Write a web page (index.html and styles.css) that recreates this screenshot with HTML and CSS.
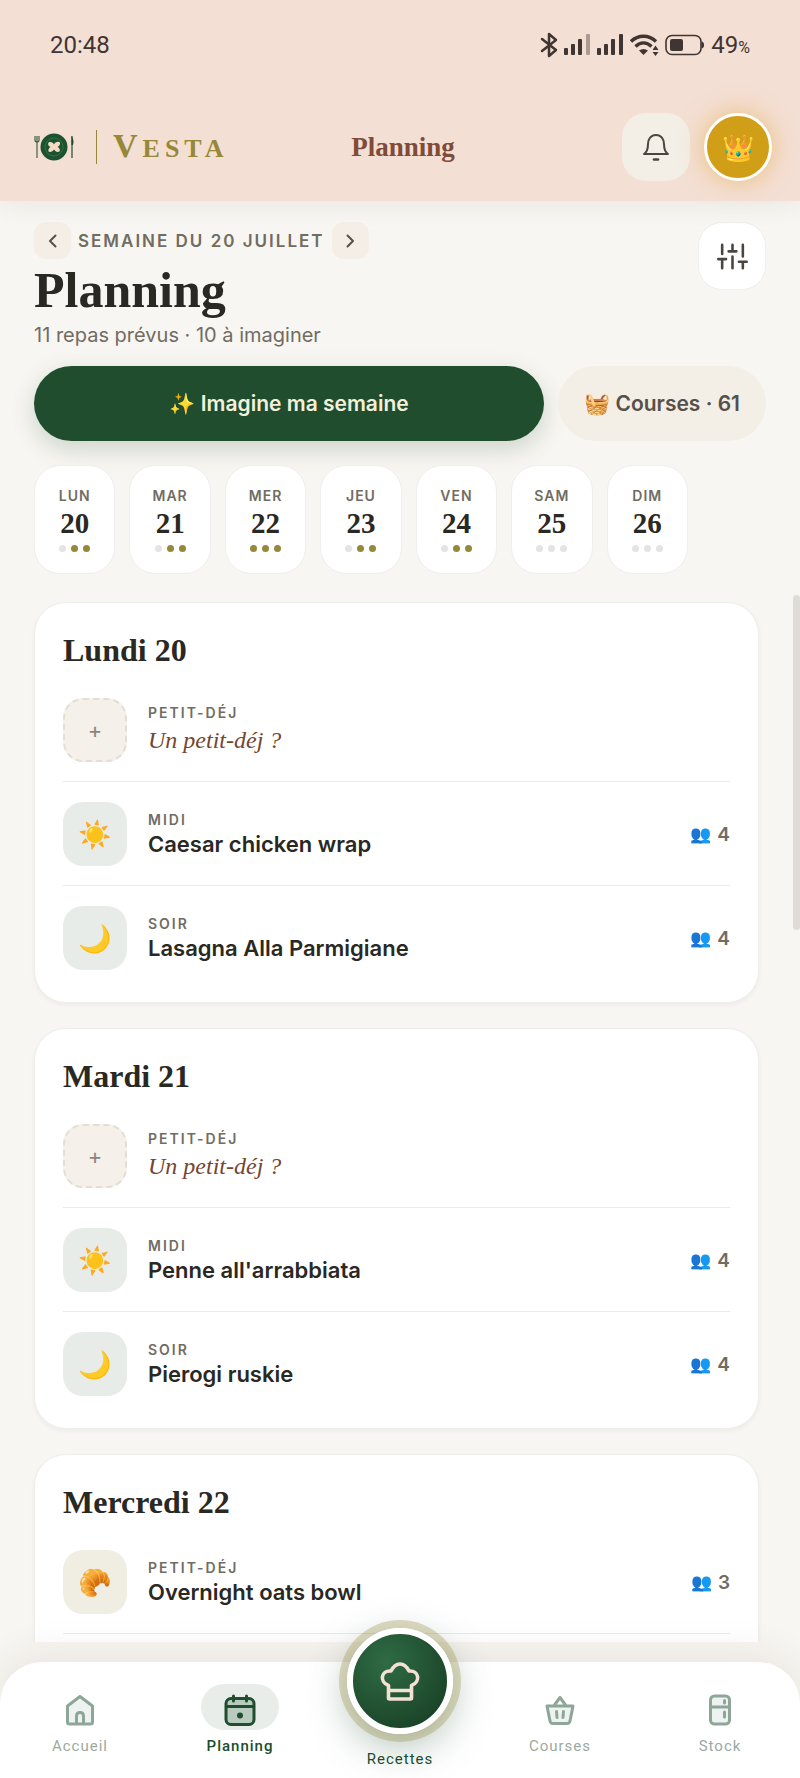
FILE: index.html
```html
<!DOCTYPE html>
<html lang="fr">
<head>
    <meta charset="UTF-8">
    <meta name="viewport" content="width=device-width, initial-scale=1.0">
    <title>Vesta - Planning</title>
    <link rel="stylesheet" href="styles.css">
</head>
<body>
    <!-- Barre d'état + en-tête -->
    <header class="header">
        <div class="status-bar">
            <span class="clock">20:48</span>
            <div class="status-icons">
                <svg width="18" height="26" viewBox="0 0 18 26" fill="none" stroke="#3f3532" stroke-width="2.500" stroke-linejoin="round" stroke-linecap="round"><path d="M2 7l14 11-7 6V2l7 6L2 19"/></svg>
                <svg width="27" height="22" viewBox="0 0 27 22" fill="#3f3532"><rect y="14" width="4" height="7" rx="1"/><rect x="7" y="10" width="4" height="11" rx="1"/><rect x="14" y="5" width="4" height="16" rx="1"/><rect x="22" width="4" height="21" rx="1" opacity=".4"/></svg>
                <svg width="27" height="22" viewBox="0 0 27 22" fill="#3f3532"><rect y="14" width="4" height="7" rx="1"/><rect x="7" y="10" width="4" height="11" rx="1"/><rect x="14" y="5" width="4" height="16" rx="1"/><rect x="22" width="4" height="21" rx="1"/></svg>
                <svg width="29" height="22" viewBox="0 0 29 22" fill="none" stroke="#3f3532" stroke-width="3.400"><path d="M1 7.500C8 .5 19 .5 26 7.500M5.500 12.500c5-4.600 11-4.600 16 0"/><path d="M9 16.500c3-2 6-2 9 0L13.500 21z" fill="#3f3532" stroke="none"/><path d="M22.500 16l3-4.500 3 4.500zM22.500 18h6l-3 4z" fill="#3f3532" stroke="none"/></svg>
                <svg width="40" height="22" viewBox="0 0 40 22"><rect x="1" y="1.500" width="35" height="19" rx="6" fill="none" stroke="#3f3532" stroke-width="1.600"/><rect x="5" y="5" width="13" height="12" rx="2" fill="#3f3532"/><path d="M37 8c2 0 2 6 0 6z" fill="#3f3532" stroke="#3f3532"/></svg>
                <span class="battery">49<small>%</small></span>
            </div>
        </div>
        <div class="top-bar">
            <a class="brand" href="#">
                <svg width="40" height="28" viewBox="0 0 40 28"><g fill="none" stroke="#3c6349"><path d="M1 3v4q0 2 2 2t2-2V3M3 3v22" stroke-width="1.200"/><path d="M38 3v22" stroke-width="1.400"/></g><path d="M37.500 3q3 4 1.500 9h-1.500z" fill="#1f4d2e"/><circle cx="20" cy="14" r="13.500" fill="#1b5230"/><circle cx="20" cy="14" r="9" fill="none" stroke="#3c7a4e" stroke-width=".8"/><path d="M20 11.500C21 9 24 8 26 9.500c.5 2-1 3.500-2.500 4.500 2 1 3 2.500 2 4.500-2.500 1-4 0-5.500-2-1.500 2-3.500 3-5.500 2-.5-2 .5-3.500 2-4.500-2-1-3-2.500-2-4.500 2-1 4-.5 5.500 2z" fill="#f3dcc3"/></svg>
                <span class="brand-line"></span>
                <span class="brand-name">V<small>ESTA</small></span>
            </a>
            <span class="page-name">Planning</span>
            <div class="top-actions">
                <button class="bell-button" aria-label="Notifications">
                    <svg width="28" height="28" viewBox="0 0 28 28" fill="none" stroke="#4a4540" stroke-width="2" stroke-linejoin="round"><path d="M2 21c3-2 4-5 4-10 0-5 3-9 8-9s8 4 8 9c0 5 1 8 4 10z"/><path d="M12 26.500h4" stroke-width="2.600" stroke-linecap="round"/></svg>
                </button>
                <button class="avatar-button" aria-label="Profil">👑</button>
            </div>
        </div>
    </header>

    <main class="content">
        <section class="intro">
            <div>
                <div class="week-nav">
                    <button class="week-button" aria-label="Semaine précédente"><svg width="14" height="14" viewBox="0 0 14 14" fill="none" stroke="#57504a" stroke-width="2" stroke-linecap="round" stroke-linejoin="round"><path d="M9.500 1.500L4 7l5.500 5.500"/></svg></button>
                    <span class="week-label">SEMAINE DU 20 JUILLET</span>
                    <button class="week-button" aria-label="Semaine suivante"><svg width="14" height="14" viewBox="0 0 14 14" fill="none" stroke="#57504a" stroke-width="2" stroke-linecap="round" stroke-linejoin="round"><path d="M4.500 1.500L10 7l-5.500 5.500"/></svg></button>
                </div>
                <h1>Planning</h1>
                <p class="summary">11 repas prévus · 10 à imaginer</p>
            </div>
            <button class="filter-button" aria-label="Réglages">
                <svg width="31" height="31" viewBox="0 0 24 24" fill="none" stroke="#4a4540" stroke-width="2" stroke-linecap="round"><path d="M4 21v-7M4 10V3M12 21v-9M12 8V3M20 21v-5M20 12V3M1 14h6M9 8h6M17 16h6"/></svg>
            </button>
        </section>

        <div class="actions">
            <button class="action-button imagine-button">✨ Imagine ma semaine</button>
            <button class="action-button shopping-button">🧺 Courses · 61</button>
        </div>

        <div class="days">
            <button class="day"><span class="day-name">LUN</span><span class="day-number">20</span><span class="dots"><i></i><i class="on"></i><i class="on"></i></span></button>
            <button class="day"><span class="day-name">MAR</span><span class="day-number">21</span><span class="dots"><i></i><i class="on"></i><i class="on"></i></span></button>
            <button class="day"><span class="day-name">MER</span><span class="day-number">22</span><span class="dots"><i class="on"></i><i class="on"></i><i class="on"></i></span></button>
            <button class="day"><span class="day-name">JEU</span><span class="day-number">23</span><span class="dots"><i></i><i class="on"></i><i class="on"></i></span></button>
            <button class="day"><span class="day-name">VEN</span><span class="day-number">24</span><span class="dots"><i></i><i class="on"></i><i class="on"></i></span></button>
            <button class="day"><span class="day-name">SAM</span><span class="day-number">25</span><span class="dots"><i></i><i></i><i></i></span></button>
            <button class="day"><span class="day-name">DIM</span><span class="day-number">26</span><span class="dots"><i></i><i></i><i></i></span></button>
        </div>

        <!-- Repas de la semaine -->
        <div class="cards">
            <section class="card">
                <h2>Lundi 20</h2>
                <div class="meal">
                    <button class="tile tile-empty" aria-label="Ajouter">+</button>
                    <div class="meal-text"><span class="slot">PETIT-DÉJ</span><span class="suggestion">Un petit-déj ?</span></div>
                </div>
                <div class="meal">
                    <span class="tile">☀️</span>
                    <div class="meal-text"><span class="slot">MIDI</span><span class="meal-name">Caesar chicken wrap</span></div>
                    <span class="guests"><span class="people">👥</span>4</span>
                </div>
                <div class="meal">
                    <span class="tile">🌙</span>
                    <div class="meal-text"><span class="slot">SOIR</span><span class="meal-name">Lasagna Alla Parmigiane</span></div>
                    <span class="guests"><span class="people">👥</span>4</span>
                </div>
            </section>

            <section class="card">
                <h2>Mardi 21</h2>
                <div class="meal">
                    <button class="tile tile-empty" aria-label="Ajouter">+</button>
                    <div class="meal-text"><span class="slot">PETIT-DÉJ</span><span class="suggestion">Un petit-déj ?</span></div>
                </div>
                <div class="meal">
                    <span class="tile">☀️</span>
                    <div class="meal-text"><span class="slot">MIDI</span><span class="meal-name">Penne all'arrabbiata</span></div>
                    <span class="guests"><span class="people">👥</span>4</span>
                </div>
                <div class="meal">
                    <span class="tile">🌙</span>
                    <div class="meal-text"><span class="slot">SOIR</span><span class="meal-name">Pierogi ruskie</span></div>
                    <span class="guests"><span class="people">👥</span>4</span>
                </div>
            </section>

            <section class="card">
                <h2>Mercredi 22</h2>
                <div class="meal">
                    <span class="tile tile-morning">🥐</span>
                    <div class="meal-text"><span class="slot">PETIT-DÉJ</span><span class="meal-name">Overnight oats bowl</span></div>
                    <span class="guests"><span class="people">👥</span>3</span>
                </div>
                <div class="meal"></div>
            </section>
        </div>
    </main>
    <div class="scroll-thumb"></div>

    <!-- Navigation -->
    <nav class="tab-bar">
        <a class="tab" href="#">
            <span class="tab-icon"><svg width="32" height="32" viewBox="0 0 32 32" fill="#edf3f0" stroke="#8ea698" stroke-width="3" stroke-linejoin="round"><path d="M3.500 12L16 2.500 28.500 12v16q0 2-2 2h-21q-2 0-2-2z"/><path d="M12.500 30V22q0-3.500 3.500-3.500t3.500 3.500v8" fill="none"/></svg></span>
            Accueil
        </a>
        <a class="tab active" href="#">
            <span class="tab-icon"><svg width="32" height="32" viewBox="0 0 32 32" fill="none" stroke="#204d2e" stroke-width="3" stroke-linecap="round"><rect x="2" y="4.500" width="28" height="26" rx="5" fill="#b9cabf"/><path d="M3 12.500h26M9.500 2v5M22.500 2v5"/><circle cx="16" cy="21.500" r="3" fill="#204d2e" stroke="none"/></svg></span>
            Planning
        </a>
        <a class="tab tab-main" href="#">
            <span class="chef-button"><svg width="40" height="40" viewBox="0 0 40 40" fill="none" stroke="#f4e0d4" stroke-width="3.600" stroke-linejoin="round"><path d="M8.500 37V24.500C-1 21 1 9 11 10c2-4 5-7 9-7s7 3 9 7c10-1 12 11 2.500 14.500V37q0 1-1 1h-21q-1 0-1-1zM8.500 29.500h23"/></svg></span>
            Recettes
        </a>
        <a class="tab" href="#">
            <span class="tab-icon"><svg width="32" height="32" viewBox="0 0 32 32" fill="#edf3f0" stroke="#8ea698" stroke-width="3" stroke-linejoin="round" stroke-linecap="round"><path d="M3 12h26l-3 15q-.5 2.500-3 2.500H9Q6.500 29.500 6 27z"/><path d="M10.500 11L16 3.500 21.500 11M12.500 17.500l.5 6M19.500 17.500l-.5 6" fill="none"/></svg></span>
            Courses
        </a>
        <a class="tab" href="#">
            <span class="tab-icon"><svg width="32" height="32" viewBox="0 0 32 32" fill="#edf3f0" stroke="#8ea698" stroke-width="3" stroke-linecap="round"><rect x="6.500" y="2" width="19" height="28" rx="4"/><path d="M7 13h18M20.500 6.500v2.500M20.500 18v5" fill="none"/></svg></span>
            Stock
        </a>
    </nav>
</body>
</html>
```
FILE: styles.css
```css
:root {
    --green: #204d2e;
    --gold: #968838;
    --text: #2a2822;
    --muted: #706c62;
    --background: #f8f6f2;
    --blush: #f4dfd4;
    --cream: #f3eee6;
    --line: #efeeec;
    --serif: "Liberation Serif", serif;
}

* {
    box-sizing: border-box;
    margin: 0;
    padding: 0;
}

body {
    height: 100vh;
    display: flex;
    flex-direction: column;
    overflow: hidden;
    position: relative;
    background: var(--background);
    color: var(--text);
    font-family: Inter, sans-serif;
}

button {
    border: none;
    font-family: inherit;
    color: inherit;
    cursor: pointer;
}

a {
    color: inherit;
    text-decoration: none;
}

/* En-tête */
.header {
    background: var(--blush);
    box-shadow: 0 4px 24px rgba(60, 40, 30, 0.07);
    position: relative;
    z-index: 2;
}

.status-bar {
    display: flex;
    justify-content: space-between;
    align-items: center;
    height: 90px;
    padding: 0 50px;
    color: #3f3532;
    font-family: Roboto, sans-serif;
    font-size: 24px;
}

.status-icons {
    display: flex;
    align-items: center;
    gap: 6px;
}

.battery small {
    font-size: 16px;
}

.top-bar {
    display: grid;
    grid-template-columns: 1fr auto 1fr;
    align-items: center;
    padding: 23px 28px 20px 34px;
}

.brand {
    display: flex;
    align-items: center;
    color: var(--gold);
}

.brand-line {
    width: 1px;
    height: 34px;
    margin: 0 16px 0 22px;
    background: var(--gold);
}

.brand-name {
    font-family: var(--serif);
    font-size: 34px;
    font-weight: 700;
    line-height: 34px;
    letter-spacing: 5px;
}

.brand-name small {
    font-size: 26px;
}

.page-name {
    color: #804c38;
    font-family: var(--serif);
    font-size: 27px;
    font-weight: 700;
}

.top-actions {
    display: flex;
    justify-content: flex-end;
    gap: 14px;
}

.bell-button,
.avatar-button,
.filter-button {
    display: flex;
    align-items: center;
    justify-content: center;
    width: 68px;
    height: 68px;
    border-radius: 24px;
}

.bell-button {
    background: var(--cream);
}

.avatar-button {
    border: 3px solid #fff;
    border-radius: 50%;
    background: #d19f17;
    box-shadow: 0 0 24px rgba(224, 160, 30, 0.5);
    font-size: 26px;
}

/* Contenu */
.content {
    flex: 1;
    min-height: 0;
    overflow: hidden;
    padding: 21px 34px 0;
}

.intro {
    display: flex;
    justify-content: space-between;
    align-items: flex-start;
}

.week-nav {
    display: flex;
    align-items: center;
    gap: 7px;
}

.week-button {
    display: flex;
    align-items: center;
    justify-content: center;
    width: 37px;
    height: 37px;
    border-radius: 12px;
    background: #f4eee7;
}

.week-label {
    color: var(--muted);
    font-size: 17px;
    font-weight: 600;
    letter-spacing: 2px;
}

h1 {
    font-family: var(--serif);
    font-size: 50px;
    line-height: 62px;
}

.summary {
    color: var(--muted);
    font-size: 20px;
    line-height: 28px;
}

.filter-button {
    border: 1px solid var(--line);
    background: #fff;
}

.actions {
    display: flex;
    gap: 14px;
    margin-top: 17px;
}

.action-button {
    height: 75px;
    padding: 0 26px;
    border-radius: 38px;
    font-size: 21px;
    font-weight: 600;
}

.imagine-button {
    flex: 1;
    background: var(--green);
    box-shadow: 0 8px 24px rgba(32, 77, 46, 0.2);
    color: #f3f1dc;
}

.shopping-button {
    background: #f3eee6;
    color: #575048;
}

.days {
    display: flex;
    gap: 14px;
    max-width: 654px;
    margin-top: 24px;
}

.day {
    flex: 1;
    display: flex;
    flex-direction: column;
    align-items: center;
    height: 109px;
    padding-top: 20px;
    border: 1px solid var(--line);
    border-radius: 26px;
    background: #fff;
}

.day-name,
.slot {
    color: var(--muted);
    font-size: 14px;
    font-weight: 600;
    line-height: 20px;
}

.day-name {
    letter-spacing: 1px;
}

.slot {
    letter-spacing: 2px;
}

.day-number {
    font-family: var(--serif);
    font-size: 29px;
    font-weight: 700;
    line-height: 34px;
}

.dots {
    display: flex;
    gap: 5px;
    margin-top: 5px;
}

.dots i {
    width: 7px;
    height: 7px;
    border-radius: 50%;
    background: #e4e4e4;
}

.dots .on {
    background: var(--gold);
}

.cards {
    display: flex;
    flex-direction: column;
    gap: 25px;
    margin-top: 28px;
    padding-right: 7px;
}

.card {
    padding: 24px 28px 13px;
    border: 1px solid var(--line);
    border-radius: 32px;
    background: #fff;
    box-shadow: 0 2px 4px rgba(60, 40, 30, 0.05);
}

h2 {
    margin-bottom: 5px;
    font-family: var(--serif);
    font-size: 32px;
    line-height: 46px;
}

.meal {
    display: flex;
    align-items: center;
    gap: 21px;
    padding: 20px 0 19px;
}

.meal + .meal {
    border-top: 1px solid #eceae8;
}

.tile {
    display: flex;
    align-items: center;
    justify-content: center;
    width: 64px;
    height: 64px;
    border-radius: 20px;
    background: #e8ece8;
    font-size: 27px;
}

.tile-morning {
    background: #f0ede2;
}

.tile-empty {
    border: 2px dashed #e2ded5;
    background: #f5f1ea;
    color: #8b867e;
    font-size: 22px;
}

.meal-text {
    display: flex;
    flex: 1;
    flex-direction: column;
}

.meal-name,
.suggestion {
    font-size: 22px;
    font-weight: 600;
    line-height: 28px;
}

.suggestion {
    color: #75462f;
    font-family: var(--serif);
    font-size: 24px;
    font-style: italic;
    font-weight: 400;
    line-height: 34px;
}

.guests {
    display: flex;
    align-items: center;
    gap: 6px;
    color: var(--muted);
    font-size: 19px;
    font-weight: 600;
}

.people {
    font-size: 17px;
}

.scroll-thumb {
    position: absolute;
    top: 595px;
    right: 0;
    width: 7px;
    height: 335px;
    border-radius: 4px;
    background: #dfdcd8;
}

/* Navigation */
.tab-bar {
    display: grid;
    grid-template-columns: repeat(5, 1fr);
    height: 116px;
    margin-top: 20px;
    padding-top: 22px;
    border-radius: 42px 42px 0 0;
    background: #fff;
    box-shadow: 0 -8px 40px rgba(60, 40, 30, 0.08);
    position: relative;
    z-index: 2;
}

.tab {
    display: flex;
    flex-direction: column;
    align-items: center;
    gap: 6px;
    color: #9baaa1;
    font-family: Roboto, sans-serif;
    font-size: 15px;
    line-height: 20px;
    letter-spacing: 1px;
}

.tab-icon {
    display: flex;
    align-items: center;
    justify-content: center;
    width: 78px;
    height: 46px;
    padding-top: 6px;
    border-radius: 23px;
}

.active,
.tab-main {
    color: var(--green);
}

.active {
    font-weight: 500;
}

.active .tab-icon {
    background: #e8edea;
}

.tab-main {
    gap: 15px;
    margin-top: -56px;
}

.chef-button {
    display: flex;
    flex-shrink: 0;
    align-items: center;
    justify-content: center;
    width: 106px;
    height: 106px;
    border: 6px solid #fff;
    border-radius: 50%;
    background: radial-gradient(circle at 35% 30%, #2f6b45, #183f24 90%);
    box-shadow: 0 0 0 8px rgba(150, 136, 56, 0.3), 0 12px 40px rgba(32, 77, 46, 0.35);
}
```
